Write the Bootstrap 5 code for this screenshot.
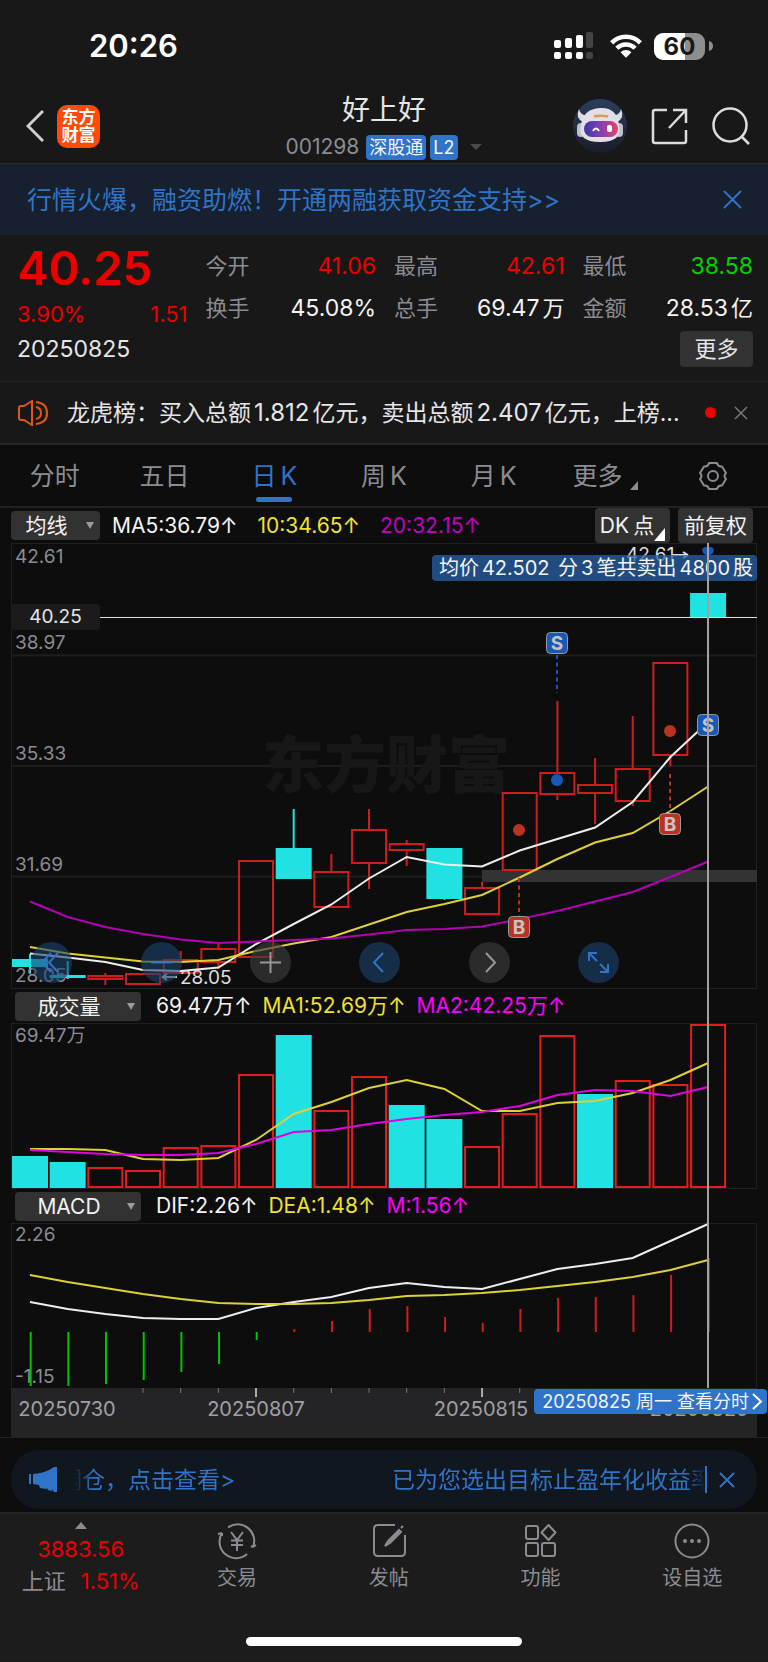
<!DOCTYPE html>
<html lang="zh-CN">
<head>
<meta charset="utf-8">
<meta name="viewport" content="width=device-width, initial-scale=1">
<title>好上好 001298</title>
<link href="https://cdn.jsdelivr.net/npm/bootstrap@5.3.0/dist/css/bootstrap.min.css" rel="stylesheet">
<style>
:root{--ink:#e6e6e8;--dim:#8b8b92;--up:#eb0000;--down:#00d200;--brand:#2f74c8;--panel:#181818;--deep:#0d0d0d;--chip:#323233;--yel:#efe22e;--mag:#fb00fb}
body{background:var(--panel);color:var(--ink);font-family:Inter,"Noto Sans CJK SC",sans-serif;font-size:22px;line-height:30px}
button{background:none;border:0;padding:0;color:inherit;line-height:inherit}
a{text-decoration:none;color:inherit}
svg{display:block;flex:none}
.up{color:var(--up)}.down{color:var(--down)}.dim{color:var(--dim)}.brand{color:var(--brand)}
.yel{color:var(--yel)}.mag{color:var(--mag)}.purple{color:#c400c4}
.num{margin:0 3px}
.statusbar{height:92px;padding:0 55px 0 89px}
.clock{font-size:31px;font-weight:600;color:#fff}
.batt{width:51px;height:27px;border-radius:9px;background:linear-gradient(90deg,#fff 60%,#8e8e8e 60%);color:#181818;font-size:24px;font-weight:700;line-height:27px}
.topbar{display:grid;grid-template-columns:1fr auto 1fr;height:71px;padding:0 18px 7px}
.logo{width:43px;height:43px;border-radius:10px;background:#ff4a08;color:#fff;font-size:17px;line-height:18px;font-weight:700;margin-left:13px}
.stock{font-size:28px;line-height:36px;margin-bottom:6px}
.code{font-size:21px;line-height:26px;gap:7px}
.tagx{background:var(--brand);color:#f2f6fc;border-radius:4px;padding:0 3px;font-size:18px;line-height:25px}
.promo{background:#16202e;border-top:1px solid #2b2b2b;height:72px;padding:0 26px 0 27px;font-size:25px}
.quote{padding:12px 15px 14px 17px}
.quote .row{--bs-gutter-x:18px;margin-bottom:2px}
.price{font-size:47px;line-height:42px;font-weight:600;margin-bottom:10px}
.val{font-size:23px}
.white{color:#f4f4f4}
.more{width:73px;height:36px;border-radius:4px;background:var(--chip)}
.notice{border-top:1px solid #232323;border-bottom:2px solid #262626;height:64px;padding:0 20px 0 18px;gap:18px;font-size:23px}
.notice .num{font-size:24px}
.reddot{width:11px;height:11px;border-radius:50%;background:#f00000}
.periods{background:var(--deep);height:63px;border-bottom:2px solid #222;display:grid;grid-template-columns:repeat(7,1fr);font-size:25px}
.periods>*{color:var(--dim);display:flex;align-items:center;justify-content:center;position:relative}
.periods>.on{color:var(--brand)}
.periods>.on::after{content:"";position:absolute;bottom:4px;width:36px;height:5px;border-radius:3px;background:var(--brand)}
.board{background:var(--deep);padding:0 11px;font-size:21px}
.main-legend{height:35px}
.legend-row{height:34px;gap:11px}
.legend-row .pick{margin-right:4px}
.pick{position:relative;background:var(--chip);border-radius:4px;height:29px;flex:none}
.pick select{appearance:none;background:none;border:0;color:#f2f2f2;font-size:21px;line-height:29px;height:29px;padding:0;width:100%;text-align:center;text-align-last:center;padding-right:18px;display:block}
.pick::after{content:"";position:absolute;right:6px;top:11px;border:4px solid transparent;border-top:7px solid #9a9a9f;border-bottom:0;pointer-events:none}
.pick-s{width:89px}.pick-l{width:126px;margin-left:4px}
.chip{background:var(--chip);height:35px;border-radius:4px;color:#f2f2f2;font-size:21px;width:75px;white-space:nowrap}
.charts svg.plot{width:100%;height:auto}
.charts text{font-family:Inter,"Noto Sans CJK SC",sans-serif}
.crosshair{left:93.3%;top:0;bottom:49px;width:2px;background:#a3a19f;pointer-events:none}
.tools{left:2.7%;width:78.8%;bottom:6px}
.tools button{width:41px;height:41px;border-radius:50%;background:rgba(60,60,62,.65);color:#98989c}
.tools button.b{background:rgba(28,66,110,.6);color:#2f74c8}
.tip{right:0;top:12px;background:rgba(40,97,170,.75);color:#f4f4f4;border-radius:4px;font-size:20px;line-height:26px;padding:0 4px 0 7px}
.pricetag{left:0;top:61px;width:89px;border-radius:4px;background:#1b1b1b;font-size:19px;line-height:26px}
.dates{background:#242427;height:49px}
.goto{right:-10px;bottom:23px;background:var(--brand);color:#f2f6fc;border-radius:4px;font-size:18px;line-height:25px;padding:0 4px 0 8px;gap:3px}
.tail{background:var(--deep);padding:12px 11px 3px;border-top:1px solid #222}
.ad{background:#10171f;border-radius:28px;height:59px;padding:0 22px 0 18px;color:var(--brand);font-size:23px}
.marq{margin-left:17px;-webkit-mask-image:linear-gradient(90deg,transparent,#000 3%,#000 97%,transparent);mask-image:linear-gradient(90deg,transparent,#000 3%,#000 97%,transparent)}
.marq span:first-child{margin-left:-15px}
.marq span:last-child{margin-right:-9px}
.ad button{margin-left:12px}
.dock{background:#1c1c1c;border-top:2px solid #262626;height:125px}
.dock .col:first-child{flex:0 0 21%}
.dock a{color:var(--dim);font-size:20px;line-height:28px}
.dock .idx{font-size:22px;line-height:32px}
.dock .idx .up{margin-left:15px}
.homebar{width:36%;height:9px;border-radius:5px;background:#fff}
.foot{background:#1c1c1c;padding-bottom:15px}
</style>
</head>
<body>
<div class="statusbar d-flex align-items-center justify-content-between">
  <span class="clock">20:26</span>
  <div class="d-flex align-items-center">
    <svg width="40" height="28" viewBox="0 0 40 28" fill="#fff"><rect x="0" y="8" width="7" height="8" rx="2"/><rect x="11" y="6" width="7" height="10" rx="2"/><rect x="22" y="3" width="7" height="13" rx="2"/><rect x="32" y="0" width="7" height="16" rx="2" fill="#444"/><rect y="20" width="7" height="7" rx="2"/><rect x="11" y="20" width="7" height="7" rx="2"/><rect x="22" y="20" width="7" height="7" rx="2"/><rect x="32" y="20" width="7" height="7" rx="2" fill="#444"/></svg>
    <svg class="ms-2 ps-1 me-1" width="44" height="28" viewBox="0 0 44 28"><g transform="translate(4 1)" fill="none" stroke="#fff" stroke-width="5"><path d="M2.200 9.500a22 22 0 0 1 31.600 0"/><path d="M8 15.500a14 14 0 0 1 20 0"/></g><path d="M22 27l-6-6a8.500 8.500 0 0 1 12 0z" fill="#fff"/></svg>
    <div class="batt text-center ms-1">60</div>
    <svg class="ms-1" width="4" height="10" viewBox="0 0 4 10"><path d="M0 0q4 1 4 5t-4 5z" fill="#8e8e8e"/></svg>
  </div>
</div>

<header class="topbar align-items-center">
  <div class="d-flex align-items-center ps-2">
    <button aria-label="返回"><svg width="18" height="32" viewBox="0 0 18 32" fill="none" stroke="#cfcfcf" stroke-width="3"><path d="M17 1L2 16l15 15"/></svg></button>
    <a href="#" class="logo d-flex align-items-center justify-content-center text-center">东方<br>财富</a>
  </div>
  <div class="text-center">
    <div class="stock">好上好</div>
    <div class="code d-flex align-items-center dim"><span>001298</span><span class="d-flex gap-1"><span class="tagx">深股通</span><span class="tagx">L2</span></span><svg class="ms-1" width="14" height="8" viewBox="0 0 14 8"><path d="M1 1h12l-6 6z" fill="#4a4a4c"/></svg></div>
  </div>
  <div class="d-flex align-items-center justify-content-end gap-4">
    <button aria-label="助手"><svg width="54" height="54" viewBox="0 0 54 54">
      <defs><linearGradient id="bg" x2="0" y2="1"><stop stop-color="#2c3d5e"/><stop offset="1" stop-color="#181d28"/></linearGradient><linearGradient id="vis"><stop stop-color="#3538a8"/><stop offset=".5" stop-color="#8a3fae"/><stop offset="1" stop-color="#e2456a"/></linearGradient></defs>
      <circle cx="27" cy="27" r="27" fill="url(#bg)"/>
      <path d="M6 10q-4 9 4 13l5-6q-8-1-9-7zM48 10q4 9-4 13l-5-6q8-1 9-7z" fill="#dcdce2"/>
      <rect x="4" y="24" width="8" height="14" rx="4" fill="#bfc0cc"/><rect x="42" y="24" width="8" height="14" rx="4" fill="#bfc0cc"/>
      <path d="M8 26Q10 10 27 9t19 17q4 17-19 17T8 26z" fill="#e2e0e6"/>
      <path d="M21 17.500q6-1.500 14 0" stroke="#d99a52" stroke-width="2.500" fill="none"/>
      <rect x="11" y="22" width="34" height="16" rx="8" fill="url(#vis)"/>
      <path d="M20 32q3-5 6 0" stroke="#fff" stroke-width="2" fill="none"/><rect x="34" y="26" width="5" height="7" rx="2" fill="#fff"/></svg></button>
    <button aria-label="分享"><svg width="37" height="37" viewBox="0 0 37 37" fill="none" stroke="#dcdcdc" stroke-width="2.500"><path d="M16 2H4q-2 0-2 2v29q0 2 2 2h29q2 0 2-2V22M22 2h13v13M35 2L18 20"/></svg></button>
    <button aria-label="搜索"><svg width="38" height="38" viewBox="0 0 38 38" fill="none" stroke="#dcdcdc" stroke-width="2.500"><circle cx="18" cy="18" r="16.500"/><path d="M29 29l8 8"/></svg></button>
  </div>
</header>

<div class="promo d-flex align-items-center justify-content-between">
  <a href="#" class="brand">行情火爆，融资助燃！开通两融获取资金支持&gt;&gt;</a>
  <button class="brand" aria-label="关闭"><svg width="19" height="19" viewBox="0 0 19 19" stroke="currentColor" stroke-width="2"><path d="M1 1l17 17M18 1L1 18"/></svg></button>
</div>

<section class="quote">
  <div class="row">
    <div class="col"><div class="price up">40.25</div><div class="d-flex justify-content-between up"><span>3.90%</span><span>1.51</span></div></div>
    <div class="col pt-1"><div class="d-flex justify-content-between"><span class="dim">今开</span><span class="val up">41.06</span></div><div class="d-flex justify-content-between mt-2 pt-1"><span class="dim">换手</span><span class="val white">45.08%</span></div></div>
    <div class="col pt-1"><div class="d-flex justify-content-between"><span class="dim">最高</span><span class="val up">42.61</span></div><div class="d-flex justify-content-between mt-2 pt-1"><span class="dim">总手</span><span class="white"><span class="val num">69.47</span>万</span></div></div>
    <div class="col pt-1"><div class="d-flex justify-content-between"><span class="dim">最低</span><span class="val down">38.58</span></div><div class="d-flex justify-content-between mt-2 pt-1"><span class="dim">金额</span><span class="white"><span class="val num">28.53</span>亿</span></div></div>
  </div>
  <div class="d-flex justify-content-between align-items-center"><span class="val">20250825</span><button class="more">更多</button></div>
</section>

<div class="notice d-flex align-items-center">
  <svg width="31" height="26" viewBox="0 0 31 26" fill="none" stroke="#e2560f" stroke-width="2"><path d="M14 1L6 6H3Q1 6 1 8v10q0 2 2 2h3l8 5zM18 7q5 1 5 6t-5 6M18 2q11 1 11 11T18 24"/></svg>
  <div class="flex-grow-1 text-truncate">龙虎榜：买入总额<span class="num">1.812</span>亿元，卖出总额<span class="num">2.407</span>亿元，上榜...</div>
  <span class="reddot flex-shrink-0"></span>
  <button class="dim" aria-label="关闭"><svg width="14" height="14" viewBox="0 0 14 14" stroke="#77777a" stroke-width="1.500"><path d="M1 1l12 12M13 1L1 13"/></svg></button>
</div>

<nav class="periods">
  <a href="#">分时</a><a href="#">五日</a><a href="#" class="on" aria-current="page">日<span class="ms-1">K</span></a><a href="#">周<span class="ms-1">K</span></a><a href="#">月<span class="ms-1">K</span></a>
  <button class="ps-1">更多<svg class="ms-2 align-self-end mb-3" width="8" height="9" viewBox="0 0 8 9"><path d="M8 0v9H0z" fill="#8b8b92"/></svg></button>
  <button aria-label="设置"><svg width="30" height="30" viewBox="0 0 30 30" fill="none" stroke="currentColor" stroke-width="2" stroke-linejoin="round"><path d="M11 2h8q1 4 5 3.500l4 6.500q-3 3 0 6l-4 6.500q-4-.5-5 3.500h-8q-1-4-5-3.500L2 18q3-3 0-6l4-6.500Q10 6 11 2z"/><circle cx="15" cy="15" r="5"/></svg></button>
</nav>

<main class="board">
  <div class="main-legend d-flex align-items-center">
    <div class="pick pick-s"><select aria-label="主图指标"><option>均线</option></select></div>
    <span class="ms-2 ps-1 white">MA5:36.79↑</span><span class="ms-3 ps-1 yel">10:34.65↑</span><span class="ms-3 ps-1 purple">20:32.15↑</span>
    <button class="chip ms-auto">DK<span class="ms-1">点</span><svg class="d-inline-block align-bottom" width="11" height="13" viewBox="0 0 11 13"><path d="M11 0v13H0z" fill="#fff"/></svg></button>
    <button class="chip ms-2 me-1">前复权</button>
  </div>
  <div class="charts position-relative">
    <div class="position-relative">
      <svg class="plot" id="kline" viewBox="11 543 746 446"></svg>
      <div class="tip position-absolute">均价<span class="num">42.502</span> 分<span class="num">3</span>笔共卖出<span class="num">4800</span>股</div>
      <div class="pricetag position-absolute text-center">40.25</div>
      <div class="tools position-absolute d-flex justify-content-between">
        <button class="b" aria-label="最早"><svg width="41" height="41" viewBox="0 0 41 41" fill="none" stroke="currentColor" stroke-width="2"><path d="M20 11l-9 9.500 9 9.500M27 11l-9 9.500 9 9.500"/></svg></button>
        <button class="b" aria-label="缩小"><svg width="41" height="41" viewBox="0 0 41 41" stroke="currentColor" stroke-width="2"><path d="M10 20.500h21"/></svg></button>
        <button aria-label="放大"><svg width="41" height="41" viewBox="0 0 41 41" stroke="currentColor" stroke-width="2"><path d="M10 20.500h21M20.500 10v21"/></svg></button>
        <button class="b" aria-label="前一日"><svg width="41" height="41" viewBox="0 0 41 41" fill="none" stroke="currentColor" stroke-width="2"><path d="M24 11l-9 9.500 9 9.500"/></svg></button>
        <button aria-label="后一日"><svg width="41" height="41" viewBox="0 0 41 41" fill="none" stroke="currentColor" stroke-width="2"><path d="M17 11l9 9.500-9 9.500"/></svg></button>
        <button class="b" aria-label="全屏"><svg width="41" height="41" viewBox="0 0 41 41" fill="none" stroke="currentColor" stroke-width="2"><path d="M11 19v-8h8M11 11l8 8M30 22v8h-8M30 30l-8-8"/></svg></button>
      </div>
    </div>
    <div class="legend-row d-flex align-items-center">
      <div class="pick pick-l"><select aria-label="副图一"><option>成交量</option></select></div>
      <span class="white">69.47万↑</span><span class="yel">MA1:52.69万↑</span><span class="mag">MA2:42.25万↑</span>
    </div>
    <svg class="plot" id="vol" viewBox="11 1023 746 166"></svg>
    <div class="legend-row d-flex align-items-center">
      <div class="pick pick-l"><select aria-label="副图二"><option>MACD</option></select></div>
      <span class="white">DIF:2.26↑</span><span class="yel">DEA:1.48↑</span><span class="mag">M:1.56↑</span>
    </div>
    <svg class="plot" id="macd" viewBox="11 1223 746 165"></svg>
    <div class="dates"><svg class="plot" id="axis" viewBox="11 1388 746 49"></svg></div>
    <div class="crosshair position-absolute"></div>
    <a href="#" class="goto position-absolute d-flex align-items-center">20250825 周一 查看分时<svg width="11" height="17" viewBox="0 0 11 17" fill="none" stroke="#fff" stroke-width="2"><path d="M1 1l8 7.500L1 16"/></svg></a>
  </div>
</main>

<div class="tail">
  <div class="ad d-flex align-items-center">
    <svg width="28" height="25" viewBox="0 0 28 25" fill="#2f74c8"><path d="M0 7h2v10H0zM4 7Q17 6 25 0h3v25h-3l-2-3v2l-4-1-1-2-1 1-6-1-1-3-6-1z"/></svg>
    <div class="marq flex-grow-1 overflow-hidden d-flex justify-content-between text-nowrap"><span>调仓，点击查看&gt;</span><span>已为您选出目标止盈年化收益率</span></div>
    <svg width="2" height="27"><path d="M1 0v27" stroke="#2f74c8" stroke-width="2"/></svg>
    <button aria-label="关闭"><svg width="16" height="16" viewBox="0 0 16 16" stroke="currentColor" stroke-width="2"><path d="M1 1l14 14M15 1L1 15"/></svg></button>
  </div>
</div>

<nav class="dock">
  <div class="row g-0 text-center">
    <div class="col"><a href="#" class="d-block"><svg class="mx-auto mt-2 mb-1" width="12" height="7" viewBox="0 0 12 7"><path d="M0 7l6-7 6 7z" fill="#8b8b92"/></svg><div class="idx up">3883.56</div><div class="idx">上证<span class="up">1.51%</span></div></a></div>
    <div class="col"><a href="#" class="d-block pt-2"><svg class="mx-auto mb-1" width="40" height="38" viewBox="0 0 40 38" fill="none" stroke="currentColor" stroke-width="2"><path d="M11 5.500A16.500 16.500 0 0 1 36 25M36 25l3-2M36 25l-2-1M30 32A16.500 16.500 0 0 1 5 11M5 11l-4 1M5 11v3M14 10l6 8 6-8M20 18v11M14 18.500h12M14 23h12"/></svg>交易</a></div>
    <div class="col"><a href="#" class="d-block pt-2"><svg class="mx-auto mb-1" width="34" height="38" viewBox="0 0 34 38" fill="none" stroke="currentColor" stroke-width="2"><path d="M23 3H6q-4 0-4 4v23q0 4 4 4h23q4 0 4-4V13"/><path d="M27 8L16 19l-3 5 5-3L29 10zM29 6l2-2" stroke-width="2" fill="currentColor"/></svg>发帖</a></div>
    <div class="col"><a href="#" class="d-block pt-2"><svg class="mx-auto mb-1" width="34" height="38" viewBox="0 0 34 38" fill="none" stroke="currentColor" stroke-width="2"><rect x="3" y="4" width="12" height="13" rx="2"/><rect x="3" y="21" width="12" height="13" rx="2"/><rect x="19" y="21" width="13" height="13" rx="2"/><path d="M25.500 3l7 7.500-7 7.500-7-7.500z" stroke-linejoin="round"/></svg>功能</a></div>
    <div class="col"><a href="#" class="d-block pt-2"><svg class="mx-auto mb-1" width="36" height="38" viewBox="0 0 36 38" fill="none" stroke="currentColor" stroke-width="2"><circle cx="18" cy="19" r="16.500"/><g fill="currentColor" stroke="none"><circle cx="11" cy="19" r="2"/><circle cx="18" cy="19" r="2"/><circle cx="25" cy="19" r="2"/></g></svg>设自选</a></div>
  </div>
</nav>
<div class="foot"><div class="homebar mx-auto"></div></div>

<script>
const RED='#d01c1c',CY='#20e2e2',X=i=>30+i*37.67;
const line=(ys,c)=>`<polyline fill="none" stroke="${c}" stroke-width="2" points="${ys.map((y,i)=>X(i).toFixed(1)+','+y).join(' ')}"/>`;
const text=(x,y,s,o='')=>`<text x="${x}" y="${y}" font-size="19" fill="#8b8b92" ${o}>${s}</text>`;
const frame=(y,h)=>`<rect x="11.500" y="${y}" width="745" height="${h}" fill="none" stroke="#1f1f21"/>`;
/* colour, high, body top, body bottom, low */
const K=[['c',954,959,967,973],['c',961,975,978,979],['r',973,976,979,985],['r',973,974,984,985],['r',951,960,973,974],['r',943,949,962,969],['r',861,861,957,957],['c',809,848,879,879],['r',854,872,907,907],['r',809,830,863,889],['r',840,844,850,866],['c',848,848,899,900],['r',882,888,914,914],['r',793,793,870,870],['r',701,773,794,800],['r',758,785,793,824],['r',716,769,801,806],['r',663,663,755,766],['c',551,593,617,667]];
let s=frame(543.5,445)+[655.5,766,876.5].map(y=>`<path d="M11 ${y}H757" stroke="#1e1e20" stroke-width="2"/>`).join('');
s+='<text x="386" y="788" font-size="62" font-weight="900" text-anchor="middle" fill="#171717">东方财富</text><rect x="482" y="870" width="275" height="12" fill="#333"/>';
K.forEach(([c,h,t,b,l],i)=>{const x=X(i),k=c=='c'?CY:RED;
 s+=`<path d="M${x} ${h}V${t}M${x} ${b}V${l}" stroke="${k}" stroke-width="2"/>`;
 s+=c=='c'?`<rect x="${x-18}" y="${t}" width="36" height="${b-t}" fill="${k}"/>`:`<rect x="${x-17}" y="${t}" width="34" height="${b-t}" fill="none" stroke="${k}" stroke-width="2"/>`});
s+=line([953.5,957.5,962,970,971,967.5,944,924,904.5,878.5,857,864.5,866.5,850.5,839,827.5,802,757,722],'#eee');
s+=line([947,953.5,957.5,961.5,962,960,951,943.5,937,924.5,912,904,895,877.5,859,842.5,833,811,786.5],'#ddd136');
s+=line([901.5,917,927,934,939.5,943,941.5,940,938.5,934.5,930,929,926.5,919,911,901.5,892,877,861.5],'#b400b4');
s+='<path d="M100 617.5H757" stroke="#ddd"/>';
const flag=(x,y,t,y1,y2,c)=>`<path d="M${x} ${y1}V${y2}" stroke="${c}" stroke-width="2" stroke-dasharray="4 3.500"/><rect x="${x-10.5}" y="${y-10.5}" width="21" height="21" rx="4" fill="${c}" stroke="#9a9a9a"/><text x="${x}" y="${y+7}" font-size="19" font-weight="700" fill="#c4c4c6" text-anchor="middle">${t}</text>`;
const BL='#1758b8',BR='#bb3222';
s+=flag(557,643,'S',655,693,BL)+flag(708,725,'S',675,714,BL)+flag(519,927,'B',878,917,BR)+flag(670,824,'B',774,812,BR);
s+=`<circle cx="557" cy="780" r="6" fill="${BL}"/><circle cx="519" cy="830" r="6" fill="${BR}"/><circle cx="670" cy="731" r="6" fill="${BR}"/><path d="M708 557l-5-4q-3-7 5-6 8-1 5 6z" fill="${BL}"/>`;
s+=text(15,563,'42.61')+text(15,649,'38.97')+text(15,760,'35.33')+text(15,871,'31.69')+text(15,982,'28.05');
s+='<path d="M162 977h15M162 977l5-3M162 977l5 3" stroke="#ccc" stroke-width="2"/>'+text(180,984,'28.05','style="fill:#ddd"')+text(626,561,'42.61','style="fill:#ddd"')+'<path d="M673 555h15M688 555l-5-3M688 555l-5 3" stroke="#ddd" stroke-width="2"/>';
kline.innerHTML=s;
/* bar top, filled or hollow */
const V=[1156,1162,1168,1171,1148,1146,1075,1035,1111,1077,1105,1119,1147,1114,1036,1094,1081,1085,1025],FILLED=[0,1,7,10,11,15];
s=frame(1023.5,165);
V.forEach((t,i)=>{const x=X(i);s+=FILLED.includes(i)?`<rect x="${x-18}" y="${t}" width="36" height="${1188-t}" fill="${CY}"/>`:`<rect x="${x-17}" y="${t}" width="34" height="${1187-t}" fill="none" stroke="#e31c1c" stroke-width="2"/>`});
s+=line([1149,1149,1150,1159,1160,1158,1140,1114,1102,1088,1080,1089,1111,1111,1103,1101,1093,1080,1063],'#ddd136')+line([1150,1152,1154,1155,1155,1153,1144,1132,1130,1124,1119,1115,1112,1106,1095,1090,1091,1096,1087],'#e000e0')+text(15,1042,'69.47万');
vol.innerHTML=s;
const M=[1386,1386,1384,1380,1372,1364,1340,1329,1321,1309,1306,1317,1323,1309,1298,1297,1295,1275,1258];
s=frame(1223.5,165)+text(15,1241,'2.26')+text(15,1383,'-1.15');
M.forEach((y,i)=>{s+=`<path d="M${X(i)+.7} 1332V${y}" stroke="${i<7?'#00c400':RED}" stroke-width="2"/>`});
s+=line([1302,1309,1314,1318,1319,1319,1308,1302,1297,1288,1283,1287,1289,1279,1269,1264,1258,1241,1224],'#eee')+line([1275,1282,1288,1294,1299,1303,1304,1304,1303,1300,1296,1295,1293,1290,1286,1282,1277,1270,1260],'#ddd136');
macd.innerHTML=s;
s='';for(let i=3;i<14;i++){const big=i==6||i==12;s+=`<path d="M${X(i)} 1388v${big?9:5}" stroke="${big?'#aaa':'#777'}" stroke-width="${big?2:1}"/>`}
s+=['20250730','20250807','20250815','20250825'].map((d,i)=>text([67,256,481,699][i],1416,d,'text-anchor="middle" style="font-size:20px;fill:#a0a0a4"')).join('');
axis.innerHTML=s;
</script>
<script src="https://cdn.jsdelivr.net/npm/bootstrap@5.3.0/dist/js/bootstrap.bundle.min.js"></script>
</body>
</html>
